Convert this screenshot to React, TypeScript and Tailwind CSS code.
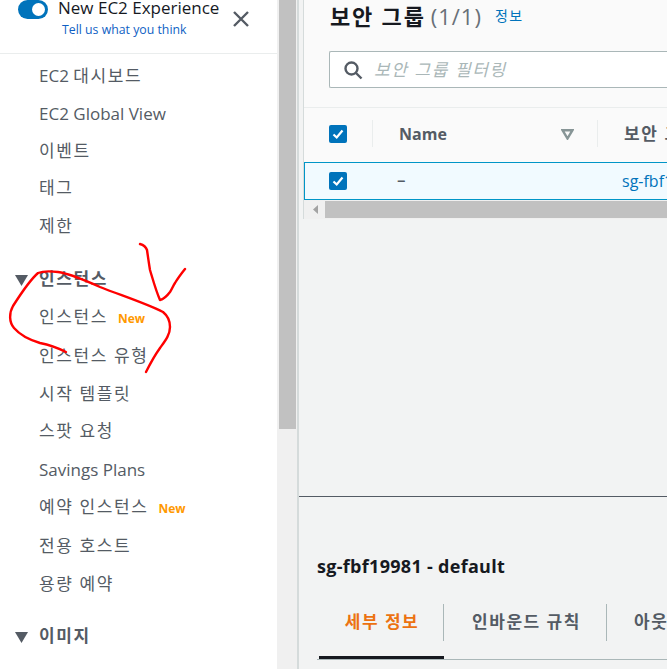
const FONT = "font-['Open_Sans','Noto_Sans_CJK_KR',sans-serif]";

function NavItem({ label, prefix, isNew, h }: { label: string; prefix?: string; isNew?: boolean; h: string }) {
  return (
    <div className={`flex items-center whitespace-pre pl-[39px] text-[17px] text-[#545b64] ${h}`}>
      {prefix && <span>{prefix}</span>}
      <span className="tracking-[1.6px]">{label}</span>
      {isNew && <span className="ml-[10px] mt-[3px] text-[12px] font-bold text-[#ff9900]">New</span>}
    </div>
  );
}

function NavHeading({ label, h }: { label: string; h: string }) {
  return (
    <div className={`flex items-center text-[17px] font-bold tracking-[1.6px] text-[#545b64] ${h}`}>
      <svg width="13" height="11" viewBox="0 0 13 11" className="ml-[15px] mr-[11px] mt-[3px]">
        <path d="M0 0H13L6.5 11Z" fill="#545b64" />
      </svg>
      <span>{label}</span>
    </div>
  );
}

function Check() {
  return (
    <div className="flex h-[18px] w-[18px] shrink-0 items-center justify-center rounded-[2px] bg-[#0073bb]">
      <svg width="14" height="14" viewBox="0 0 14 14" fill="none">
        <path d="M2.5 7.5L5.7 10.5L11.5 3.5" stroke="#fff" strokeWidth="2.2" />
      </svg>
    </div>
  );
}

function Annotation() {
  return (
    <svg className="pointer-events-none absolute left-0 top-0" width="667" height="669" viewBox="0 0 667 669" fill="none">
      <path
        d="M140 244C144 245 146 247 147 250C148 257 149 264 150 270C153 280 156 291 160 300C164 299 167 296 170 292C172 289 173 286 175 283C178 278 181 274 185 269"
        stroke="#f00"
        strokeWidth="2.4"
        strokeLinecap="round"
        strokeLinejoin="round"
      />
      <path
        d="M66 352C58 348 50 345 40 343C30 340 20 335 14 328C9 322 9 313 13 306C20 295 30 280 38 273C43 271 50 271 58 272C72 274 86 281 100 287C120 295 145 303 163 312C168 316 170 321 170 327C170 335 165 341 160 348C155 355 150 364 146 372"
        stroke="#f00"
        strokeWidth="2.4"
        strokeLinecap="round"
        strokeLinejoin="round"
      />
    </svg>
  );
}

export default function App() {
  return (
    <div className={`relative flex h-[669px] w-[667px] overflow-hidden bg-[#f2f3f3] ${FONT}`}>
      {/* Sidebar */}
      <aside className="h-full w-[277px] shrink-0 bg-white">
        <div className="relative h-[54px] border-b border-[#eaeded]">
          <div className="flex items-start pl-[18px]">
            <div className="mr-[10px] flex h-[19px] w-[30px] items-center justify-end rounded-full bg-[#0073bb] pr-[3px]">
              <div className="h-[13px] w-[13px] rounded-full bg-white" />
            </div>
            <div className="text-[17px] leading-[16px] text-[#16191f]">New EC2 Experience</div>
          </div>
          <div className="pl-[62px] pt-[3px] text-[12.3px] leading-[16px] text-[#0f5fc4]">Tell us what you think</div>
          <svg width="16" height="16" viewBox="0 0 16 16" className="absolute left-[233px] top-[11px]">
            <path d="M1 1L15 15M15 1L1 15" stroke="#545b64" strokeWidth="2.4" />
          </svg>
        </div>
        <nav className="pt-[3px]">
          <NavItem prefix="EC2 " label="대시보드" h="h-[38px]" />
          <div className="flex h-[38px] items-center pl-[39px] text-[17px] text-[#545b64]">EC2 Global View</div>
          <NavItem label="이벤트" h="h-[36px]" />
          <NavItem label="태그" h="h-[38px]" />
          <NavItem label="제한" h="h-[38px]" />
          <div className="h-[14px]" />
          <NavHeading label="인스턴스" h="h-[39px]" />
          <NavItem label="인스턴스" isNew h="h-[38px] mb-px" />
          <NavItem label="인스턴스 유형" h="h-[38px]" />
          <NavItem label="시작 템플릿" h="h-[38px] -mb-px" />
          <NavItem label="스팟 요청" h="h-[37px] mb-[2px]" />
          <div className="flex h-[38px] items-center pl-[39px] text-[17px] text-[#545b64] -mb-px">Savings Plans</div>
          <NavItem label="예약 인스턴스" isNew h="h-[38px] mb-px" />
          <NavItem label="전용 호스트" h="h-[38px]" />
          <NavItem label="용량 예약" h="h-[38px]" />
          <div className="h-[14px]" />
          <NavHeading label="이미지" h="h-[38px]" />
        </nav>
      </aside>

      {/* Page scrollbar */}
      <div className="h-full w-[20px] shrink-0 bg-[#f0f0f0] pl-[2px] pr-[1px]">
        <div className="h-[429px] bg-[#c1c1c1]" />
      </div>

      {/* Main */}
      <main className="flex h-full min-w-0 flex-1 flex-col border-l-2 border-[#d5dbdb]">
        <div className="ml-[4px] border-l border-[#d5dbdb] bg-[#fafafa]">
          <div className="h-[107px] pl-[25px]">
            <div className="flex items-center pl-px pt-[2px] leading-[28px]">
              <span className="text-[22px] font-bold tracking-[1.8px] text-[#16191f]">보안 그룹</span>
              <span className="ml-[5px] text-[22px] tracking-[1px] text-[#687078]">(1/1)</span>
              <span className="ml-[13px] text-[14px] tracking-[1.5px] text-[#0073bb]">정보</span>
            </div>
            <div className="mt-[21px] flex h-[37px] items-center rounded-l-[2px] border border-r-0 border-[#aab7b8] bg-white pl-[13px]">
              <svg width="20" height="20" viewBox="0 0 20 20" fill="none">
                <circle cx="8.5" cy="8.5" r="6" stroke="#545b64" strokeWidth="2.4" />
                <path d="M13 13L18.5 18.5" stroke="#545b64" strokeWidth="2.4" />
              </svg>
              <span className="ml-[11px] whitespace-nowrap text-[17px] italic tracking-[1.6px] text-[#aab7b8]">보안 그룹 필터링</span>
            </div>
          </div>
          <div className="flex h-[55px] items-center border-t border-[#eaeded] pb-[3px] pl-[25px]">
            <Check />
            <div className="ml-[25px] h-[27px] w-px shrink-0 bg-[#eaeded]" />
            <span className="ml-[26px] w-[162px] shrink-0 text-[16px] font-bold text-[#545b64]">Name</span>
            <svg width="13" height="11" viewBox="0 0 13 11" fill="none" className="mt-[2px] shrink-0">
              <path d="M1.5 1.2H11.5L6.5 9.5Z" stroke="#879596" strokeWidth="2.4" />
            </svg>
            <div className="ml-[23px] h-[27px] w-px shrink-0 bg-[#eaeded]" />
            <span className="ml-[26px] whitespace-nowrap text-[17px] font-bold tracking-[1.6px] text-[#545b64]">보안 그룹 ID</span>
          </div>
          <div className="flex h-[38px] items-center border border-r-0 border-[#0095c7] bg-[#f1faff] pl-[24px]">
            <Check />
            <span className="ml-[50px] mb-[3px] w-[225px] shrink-0 text-[17px] font-semibold text-[#545b64]">–</span>
            <span className="whitespace-nowrap text-[16px] text-[#0073bb]">sg-fbf19981</span>
          </div>
          <div className="flex h-[19px] items-center bg-[#f0f0f0]">
            <svg width="6" height="9" viewBox="0 0 6 9" className="ml-[9px]">
              <path d="M5 0V9L0 4.5Z" fill="#a3a3a3" />
            </svg>
            <div className="ml-[6px] h-[17px] flex-1 bg-[#c1c1c1]" />
          </div>
        </div>

        <div className="h-[278px] shrink-0 border-b border-[#545b64]" />
        <div className="pl-[18px] pt-[57px]">
          <div className="whitespace-nowrap text-[18px] font-bold leading-[24px] tracking-[0.3px] text-[#16191f]">sg-fbf19981 - default</div>
          <div className="mt-[26px] flex h-[56px] border-b border-[#aab7b8]">
            <div className="relative h-[55px] w-[127px] shrink-0">
              <div className="flex h-[37px] items-center justify-center whitespace-nowrap border-r border-[#aab7b8] pb-px pl-[4px] text-[17px] font-bold tracking-[1.5px] text-[#ec7211]">
                세부 정보
              </div>
              <div className="absolute bottom-0 left-[2px] h-[3px] w-[125px] bg-[#16191f]" />
            </div>
            <div className="flex h-[37px] w-[163px] shrink-0 items-center justify-center whitespace-nowrap border-r border-[#aab7b8] pb-px pl-[3px] text-[17px] font-bold tracking-[1.5px] text-[#545b64]">
              인바운드 규칙
            </div>
            <div className="flex h-[37px] items-center whitespace-nowrap pb-px pl-[27px] text-[17px] font-bold tracking-[1.5px] text-[#545b64]">
              아웃바운드 규칙
            </div>
          </div>
        </div>
      </main>

      <Annotation />
    </div>
  );
}
